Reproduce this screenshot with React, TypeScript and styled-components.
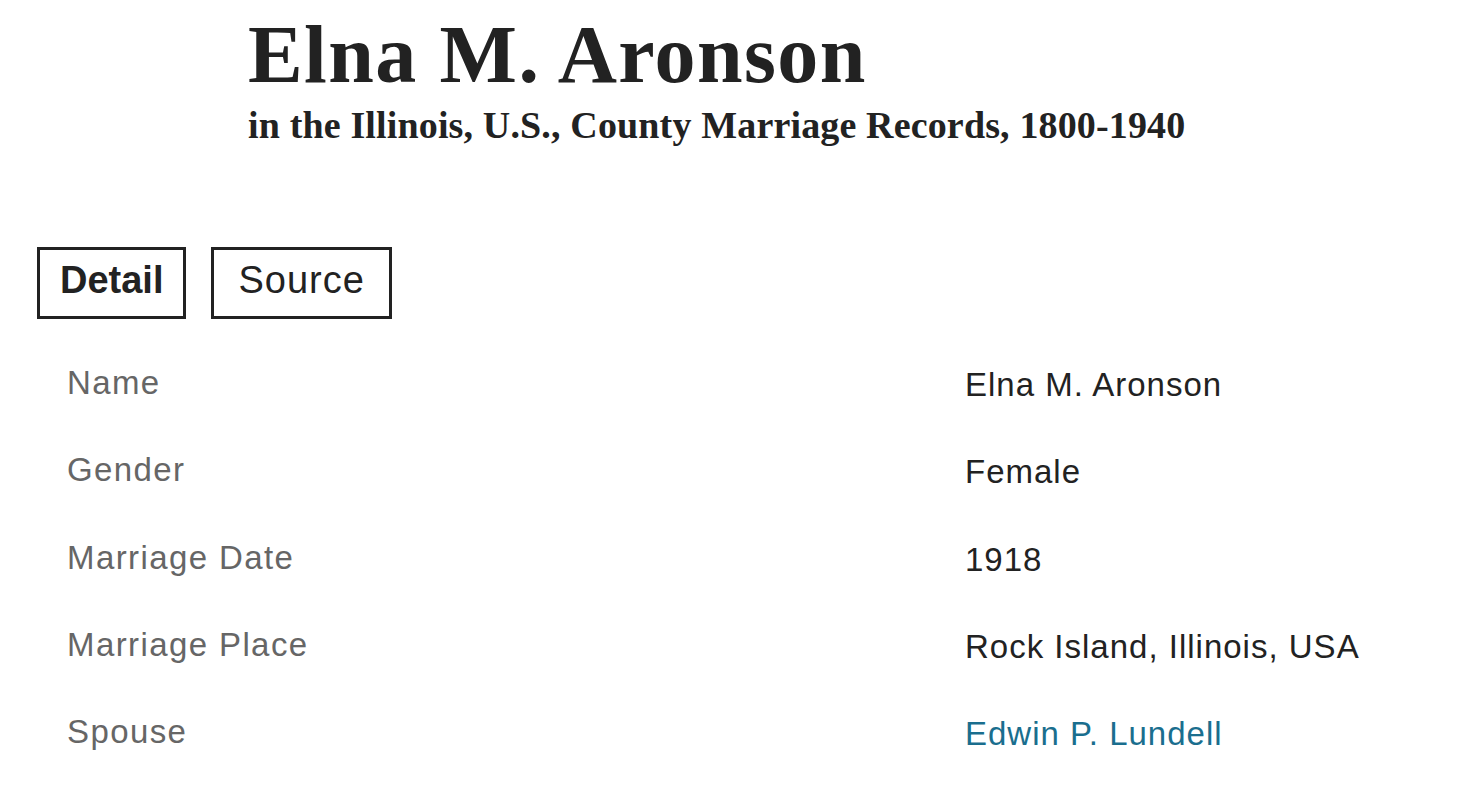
import React, { useState } from "react";
import styled, { createGlobalStyle } from "styled-components";

const GlobalStyle = createGlobalStyle`
  body {
    margin: 0;
    background: #fff;
    color: #222;
    font-family: "Liberation Sans", Arial, sans-serif;
  }
`;

const Page = styled.div`
  display: flex;
  flex-direction: column;
`;

const Header = styled.header`
  padding: 14px 0 0 248px;
`;

const Title = styled.h1`
  margin: 0;
  font-family: "Liberation Serif", "Times New Roman", serif;
  font-weight: 700;
  font-size: 82px;
  line-height: 1;
  letter-spacing: 1.4px;
  color: #222;
`;

const Subtitle = styled.h2`
  margin: 10px 0 0;
  font-family: "Liberation Serif", "Times New Roman", serif;
  font-weight: 700;
  font-size: 38px;
  line-height: 1;
  letter-spacing: 0.15px;
  color: #222;
`;

const Tabs = styled.nav`
  display: flex;
  gap: 25px;
  margin: 103px 0 0 37px;
`;

const Tab = styled.button<{ $active?: boolean }>`
  box-sizing: border-box;
  height: 72px;
  display: flex;
  align-items: center;
  padding: 0 ${(p) => (p.$active ? "20px" : "24px")} 6px;
  border: 3px solid #222;
  background: #fff;
  color: #222;
  font-family: "Liberation Sans", Arial, sans-serif;
  font-size: 38px;
  line-height: 1;
  letter-spacing: ${(p) => (p.$active ? "0" : "1px")};
  font-weight: ${(p) => (p.$active ? 700 : 400)};
  cursor: pointer;
`;

const Facts = styled.dl`
  display: flex;
  flex-direction: column;
  gap: 52.25px;
  margin: 47px 0 0;
  padding: 0 0 0 67px;
`;

const Fact = styled.div`
  display: grid;
  grid-template-columns: 898px 1fr;
  align-items: start;
`;

const Label = styled.dt`
  margin: 0;
  font-size: 33px;
  line-height: 1;
  letter-spacing: 1.4px;
  color: #666;
`;

const Value = styled.dd`
  margin: 0;
  padding-top: 2px;
  font-size: 33px;
  line-height: 1;
  letter-spacing: 1px;
  color: #222;
`;

const PersonLink = styled.a`
  color: #1a6e8e;
  text-decoration: none;
`;

const facts: { label: string; value: string; link?: boolean }[] = [
  { label: "Name", value: "Elna M. Aronson" },
  { label: "Gender", value: "Female" },
  { label: "Marriage Date", value: "1918" },
  { label: "Marriage Place", value: "Rock Island, Illinois, USA" },
  { label: "Spouse", value: "Edwin P. Lundell", link: true },
];

export default function App() {
  const [tab, setTab] = useState("detail");

  return (
    <Page>
      <GlobalStyle />
      <Header>
        <Title>Elna M. Aronson</Title>
        <Subtitle>in the Illinois, U.S., County Marriage Records, 1800-1940</Subtitle>
      </Header>
      <Tabs>
        <Tab $active={tab === "detail"} onClick={() => setTab("detail")}>
          Detail
        </Tab>
        <Tab $active={tab === "source"} onClick={() => setTab("source")}>
          Source
        </Tab>
      </Tabs>
      <Facts>
        {facts.map((f) => (
          <Fact key={f.label}>
            <Label>{f.label}</Label>
            <Value>
              {f.link ? <PersonLink href="#">{f.value}</PersonLink> : f.value}
            </Value>
          </Fact>
        ))}
      </Facts>
    </Page>
  );
}
